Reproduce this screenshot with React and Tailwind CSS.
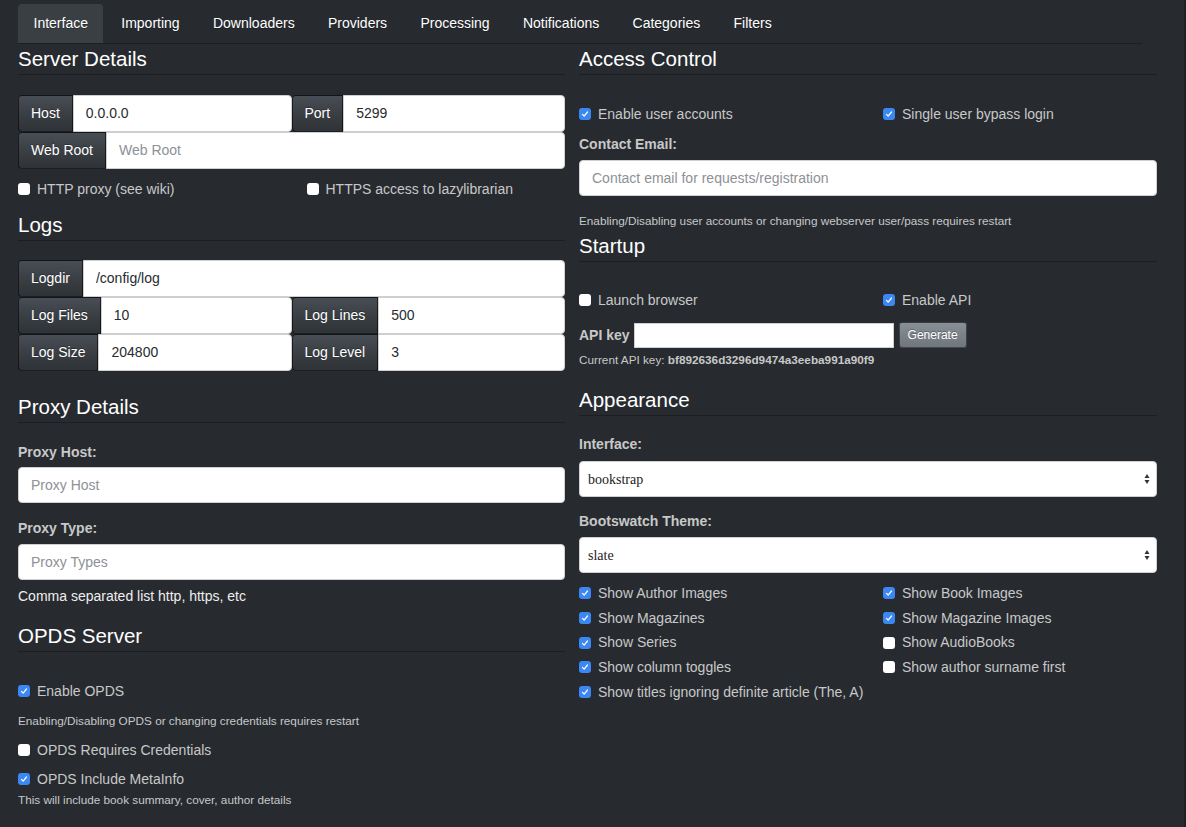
import React from 'react';

const tabs = ['Interface', 'Importing', 'Downloaders', 'Providers', 'Processing', 'Notifications', 'Categories', 'Filters'];

function Check({ checked }) {
    return checked ? (
        <span className="w-3 h-3 rounded-[3px] bg-[#3b87f4] flex items-center justify-center shrink-0">
            <svg viewBox="0 0 12 12" className="w-[10px] h-[10px]">
                <path d="M3 6.4l2 2.1L9 3.6" stroke="white" strokeWidth="1.5" fill="none" strokeLinecap="round" strokeLinejoin="round" />
            </svg>
        </span>
    ) : (
        <span className="w-3 h-3 rounded-[3px] bg-white shrink-0" />
    );
}

function CheckRow({ checked, label, className = '' }) {
    return (
        <label className={`flex items-center gap-[7px] h-5 text-[14px] text-[#c8c8c8] ${className}`}>
            <Check checked={checked} />
            <span>{label}</span>
        </label>
    );
}

function Heading({ children, className = '' }) {
    return (
        <h3 className={`text-[20.5px] leading-[22px] text-white pb-1 border-b border-[#1c1e22] ${className}`}>
            {children}
        </h3>
    );
}

function Addon({ children }) {
    return (
        <span className="flex items-center px-3 text-[14px] text-white bg-gradient-to-b from-[#484e55] via-[#3a3f44] to-[#2f3337] border border-black/60 rounded-l-[4px] [text-shadow:0_-1px_0_rgba(0,0,0,0.3)] whitespace-nowrap">
            {children}
        </span>
    );
}

function GroupInput({ value, placeholder }) {
    return (
        <input
            defaultValue={value}
            placeholder={placeholder}
            className="flex-1 min-w-0 bg-white px-3 text-[14px] text-[#272b30] placeholder:text-[#8e9196] rounded-r-[4px] border border-[#cfcfcf] outline-none"
        />
    );
}

function Group({ label, value, placeholder, className = '' }) {
    return (
        <div className={`flex flex-1 min-w-0 ${className}`}>
            <Addon>{label}</Addon>
            <GroupInput value={value} placeholder={placeholder} />
        </div>
    );
}

function TextInput({ placeholder, className = '' }) {
    return (
        <input
            placeholder={placeholder}
            className={`block w-full h-9 bg-white px-3 text-[14px] text-[#272b30] placeholder:text-[#8e9196] rounded-[4px] border border-[#cfcfcf] outline-none ${className}`}
        />
    );
}

function Select({ value, className = '' }) {
    return (
        <div className={`flex items-center justify-between h-9 bg-white rounded-[4px] border border-[#cfcfcf] pl-2 pr-[6px] ${className}`}>
            <span className="font-['Liberation_Serif',serif] text-[14px] text-[#222]">{value}</span>
            <svg viewBox="0 0 6 12" className="w-[6px] h-[12px]">
                <path d="M3 1L5.5 5H0.5z" fill="#333" />
                <path d="M3 11L5.5 7H0.5z" fill="#333" />
            </svg>
        </div>
    );
}

function Label({ children, className = '' }) {
    return <div className={`text-[14px] leading-[18px] font-bold text-[#c8c8c8] ${className}`}>{children}</div>;
}

function Help({ children, className = '' }) {
    return <div className={`text-[11.75px] leading-4 text-[#c8c8c8] ${className}`}>{children}</div>;
}

export default function App() {
    return (
        <div className="w-[1186px] min-h-[827px] bg-[#272b30] border-r-2 border-[#1e2125] font-['Liberation_Sans',Arial,sans-serif] overflow-hidden">
            <nav className="ml-[18px] w-[1124px] pt-1 flex border-b border-[#1c1e22]">
                {tabs.map((t, i) => (
                    <div
                        key={t}
                        className={`h-[39px] px-[15.5px] mr-[2.3px] flex items-center text-[14px] text-white rounded-t-[4px] [text-shadow:0_1px_0_rgba(0,0,0,0.3)] ${i === 0 ? 'bg-[#3a3f44]' : ''}`}
                    >
                        {t}
                    </div>
                ))}
            </nav>

            <div className="flex gap-[14px] pl-[18px]">
                {/* left column */}
                <div className="w-[547px] shrink-0">
                    <Heading className="mt-1">Server Details</Heading>
                    <div className="mt-5 flex h-[37px]">
                        <Group label="Host" value="0.0.0.0" />
                        <Group label="Port" value="5299" />
                    </div>
                    <div className="flex h-[37px]">
                        <Group label="Web Root" placeholder="Web Root" />
                    </div>
                    <div className="mt-[10px] grid grid-cols-2 gap-x-[30px]">
                        <CheckRow label="HTTP proxy (see wiki)" />
                        <CheckRow label="HTTPS access to lazylibrarian" />
                    </div>

                    <Heading className="mt-[15px]">Logs</Heading>
                    <div className="mt-[19px] flex h-[37px]">
                        <Group label="Logdir" value="/config/log" />
                    </div>
                    <div className="flex h-[37px]">
                        <Group label="Log Files" value="10" />
                        <Group label="Log Lines" value="500" />
                    </div>
                    <div className="flex h-[37px]">
                        <Group label="Log Size" value="204800" />
                        <Group label="Log Level" value="3" />
                    </div>

                    <Heading className="mt-[25px]">Proxy Details</Heading>
                    <Label className="mt-5">Proxy Host:</Label>
                    <TextInput placeholder="Proxy Host" className="mt-[6px]" />
                    <Label className="mt-4">Proxy Type:</Label>
                    <TextInput placeholder="Proxy Types" className="mt-[7px]" />
                    <div className="mt-[7px] text-[14px] leading-[18px] text-[#eeeeee]">Comma separated list http, https, etc</div>

                    <Heading className="mt-5">OPDS Server</Heading>
                    <CheckRow checked label="Enable OPDS" className="mt-[29px]" />
                    <Help className="mt-3">Enabling/Disabling OPDS or changing credentials requires restart</Help>
                    <CheckRow label="OPDS Requires Credentials" className="mt-[11px]" />
                    <CheckRow checked label="OPDS Include MetaInfo" className="mt-[9px]" />
                    <Help className="mt-[3px]">This will include book summary, cover, author details</Help>
                </div>

                {/* right column */}
                <div className="w-[578px] shrink-0">
                    <Heading className="mt-1">Access Control</Heading>
                    <div className="mt-[29px] grid grid-cols-2 gap-x-[30px]">
                        <CheckRow checked label="Enable user accounts" />
                        <CheckRow checked label="Single user bypass login" />
                    </div>
                    <Label className="mt-[11px]">Contact Email:</Label>
                    <TextInput placeholder="Contact email for requests/registration" className="mt-[7px]" />
                    <Help className="mt-[17px]">Enabling/Disabling user accounts or changing webserver user/pass requires restart</Help>

                    <Heading className="mt-[6px]">Startup</Heading>
                    <div className="mt-[28px] grid grid-cols-2 gap-x-[30px]">
                        <CheckRow label="Launch browser" />
                        <CheckRow checked label="Enable API" />
                    </div>
                    <div className="mt-3 flex items-center h-[26px]">
                        <span className="text-[14px] font-bold text-[#c8c8c8] mr-1">API key</span>
                        <input className="w-[260px] h-[25px] bg-white border border-[#cfcfcf] outline-none" />
                        <button className="ml-[5px] w-[68px] h-[26px] rounded-[3px] text-[12px] text-white bg-gradient-to-b from-[#8a9196] via-[#7a8288] to-[#70777c] border border-black/50 [text-shadow:0_-1px_0_rgba(0,0,0,0.3)]">
                            Generate
                        </button>
                    </div>
                    <Help className="mt-1">
                        Current API key: <span className="font-bold">bf892636d3296d9474a3eeba991a90f9</span>
                    </Help>

                    <Heading className="mt-[21px]">Appearance</Heading>
                    <Label className="mt-[19px]">Interface:</Label>
                    <Select value="bookstrap" className="mt-2" />
                    <Label className="mt-[15px]">Bootswatch Theme:</Label>
                    <Select value="slate" className="mt-[7px]" />
                    <div className="mt-2 grid grid-cols-2 gap-x-[30px] auto-rows-[24.7px]">
                        <CheckRow checked label="Show Author Images" className="h-auto" />
                        <CheckRow checked label="Show Book Images" className="h-auto" />
                        <CheckRow checked label="Show Magazines" className="h-auto" />
                        <CheckRow checked label="Show Magazine Images" className="h-auto" />
                        <CheckRow checked label="Show Series" className="h-auto" />
                        <CheckRow label="Show AudioBooks" className="h-auto" />
                        <CheckRow checked label="Show column toggles" className="h-auto" />
                        <CheckRow label="Show author surname first" className="h-auto" />
                        <CheckRow checked label="Show titles ignoring definite article (The, A)" className="h-auto col-span-2" />
                    </div>
                </div>
            </div>
        </div>
    );
}
